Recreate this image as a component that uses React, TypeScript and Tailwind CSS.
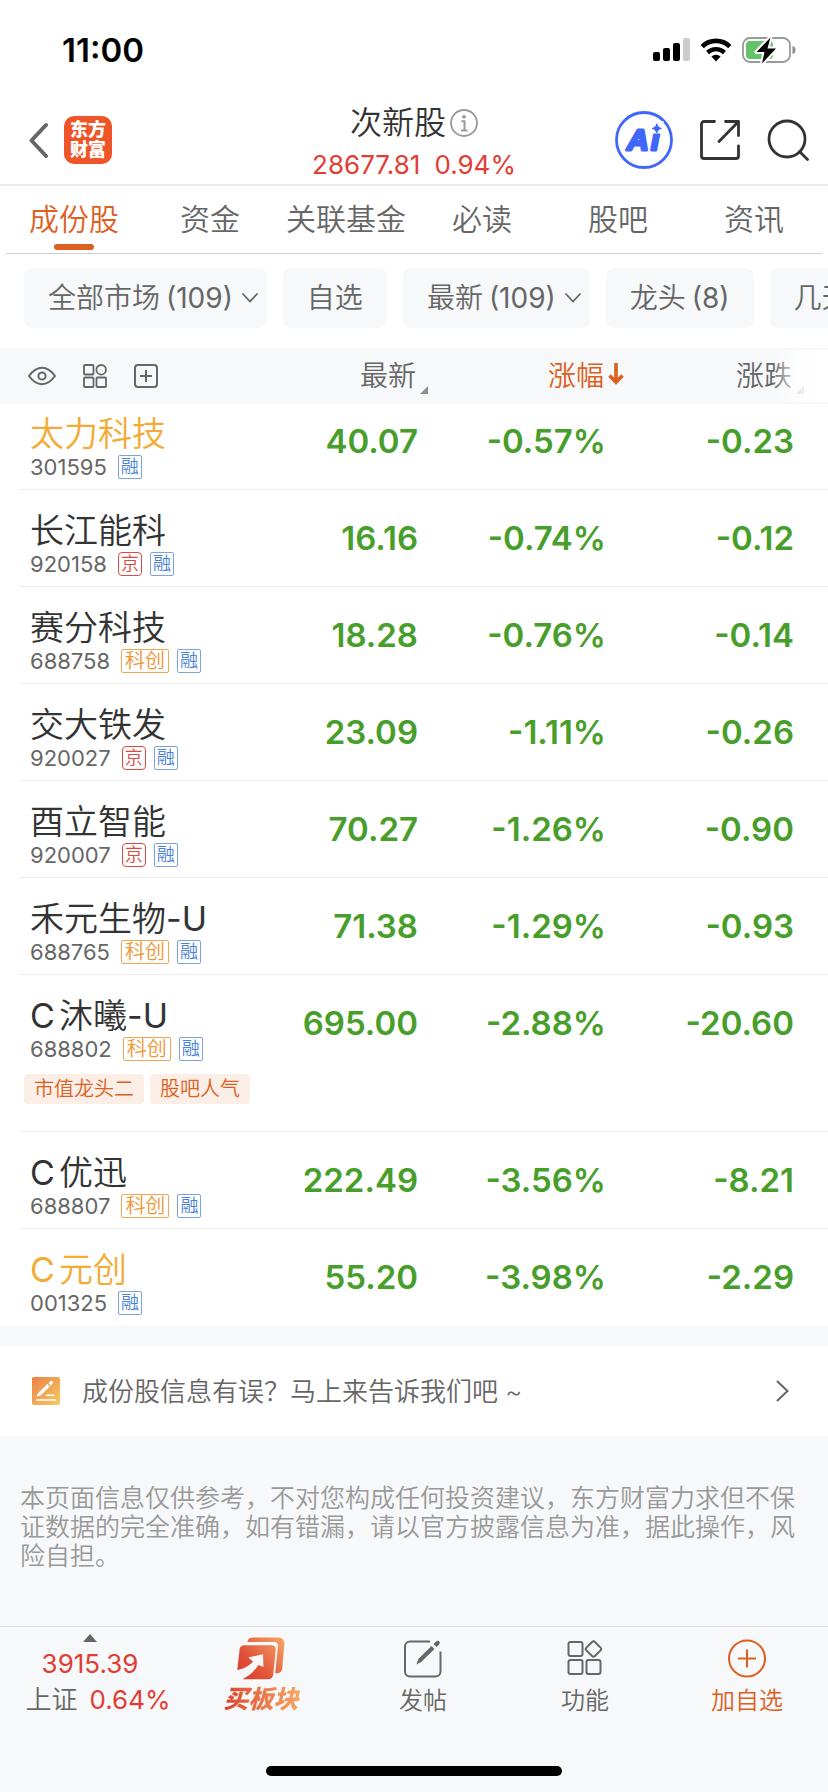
import React from "react";

type Tag = "京" | "融" | "科创";

interface Stock {
  name: string;
  code: string;
  tags: Tag[];
  price: string;
  pct: string;
  change: string;
  highlight?: boolean;
  labels?: string[];
}

const stocks: Stock[] = [
  { name: "太力科技", code: "301595", tags: ["融"], price: "40.07", pct: "-0.57%", change: "-0.23", highlight: true },
  { name: "长江能科", code: "920158", tags: ["京", "融"], price: "16.16", pct: "-0.74%", change: "-0.12" },
  { name: "赛分科技", code: "688758", tags: ["科创", "融"], price: "18.28", pct: "-0.76%", change: "-0.14" },
  { name: "交大铁发", code: "920027", tags: ["京", "融"], price: "23.09", pct: "-1.11%", change: "-0.26" },
  { name: "酉立智能", code: "920007", tags: ["京", "融"], price: "70.27", pct: "-1.26%", change: "-0.90" },
  { name: "禾元生物-U", code: "688765", tags: ["科创", "融"], price: "71.38", pct: "-1.29%", change: "-0.93" },
  {
    name: "C沐曦-U",
    code: "688802",
    tags: ["科创", "融"],
    price: "695.00",
    pct: "-2.88%",
    change: "-20.60",
    labels: ["市值龙头二", "股吧人气"],
  },
  { name: "C优迅", code: "688807", tags: ["科创", "融"], price: "222.49", pct: "-3.56%", change: "-8.21" },
  { name: "C元创", code: "001325", tags: ["融"], price: "55.20", pct: "-3.98%", change: "-2.29", highlight: true },
];

const tabs = ["成份股", "资金", "关联基金", "必读", "股吧", "资讯"];

const filters = [
  { label: "全部市场", count: "(109)", menu: true },
  { label: "自选" },
  { label: "最新", count: "(109)", menu: true },
  { label: "龙头", count: "(8)" },
  { label: "几天几板" },
];

const tagStyle: Record<Tag, string> = {
  京: "w-6 rounded-[4px] border-[#dc4a44] text-[#dc4a44] text-[18px]",
  融: "w-6 rounded-[2px] border-[#7ba3e0] text-[#4a82d6] text-[18px]",
  科创: "w-12 rounded-[2px] border-[#f2a654] text-[#f09530] text-[20px]",
};

function StatusBar() {
  return (
    <div className="flex h-[92px] items-center justify-between pt-2 pr-8 pl-[62px]">
      <span className="text-[33px] leading-10 font-semibold text-black">11:00</span>
      <div className="flex items-center gap-[10px]">
        <svg width="37" height="24" viewBox="0 0 37 24" aria-label="信号">
          <rect x="0" y="14" width="7" height="9" rx="2" />
          <rect x="10" y="10" width="7" height="13" rx="2" />
          <rect x="20" y="5" width="7" height="18" rx="2" />
          <rect x="30" y="0" width="7" height="23" rx="2" fill="#ccc" />
        </svg>
        <svg width="32" height="24" viewBox="0 0 32 24" aria-label="无线网络">
          <path d="M2.2 8.6a19.6 19.6 0 0 1 27.6 0" fill="none" stroke="#000" strokeWidth="4.6" />
          <path d="M7.6 14.6a12 12 0 0 1 16.8 0" fill="none" stroke="#000" strokeWidth="4.4" />
          <path d="M16 23.4l-4.6-4.8a6.600 6.600 0 0 1 9.200 0z" />
        </svg>
        <svg width="54" height="28" viewBox="0 0 54 28" aria-label="电池">
          <rect x="1" y="2" width="47" height="24" rx="7" fill="none" stroke="#999" strokeWidth="1.8" />
          <path d="M50.500 10v8c2-.6 3-2 3-4s-1-3.400-3-4z" fill="#8c8c8c" />
          <rect x="4" y="5" width="27" height="18" rx="4" fill="#62c466" />
          <path d="M28.500 1.500L14.500 16h8l-2.500 11.500L34 12.500h-8.500z" fill="#000" stroke="#fff" strokeWidth="4" strokeLinejoin="round" />
          <path d="M28.500 1.500L14.500 16h8l-2.500 11.500L34 12.500h-8.500z" fill="#000" />
        </svg>
      </div>
    </div>
  );
}

function Header() {
  return (
    <header className="grid h-[94px] grid-cols-[1fr_auto_1fr] items-center border-b-2 border-[#ebebeb] px-[19px]">
      <div className="flex items-center gap-4 pt-1 pl-[9px]">
        <button type="button" aria-label="返回">
          <svg width="20" height="36" viewBox="0 0 20 36" fill="none" stroke="#666" strokeWidth="4" strokeLinecap="round" strokeLinejoin="round">
            <path d="M18 3L3.500 18.500 18 34" />
          </svg>
        </button>
        <a
          href="#home"
          className="flex size-12 flex-col items-center justify-center rounded-[10px] bg-[#ee5528] text-[18px] leading-5 font-black text-white"
        >
          <span>东方</span>
          <span>财富</span>
        </a>
      </div>
      <div className="flex flex-col items-center pt-2">
        <h1 className="flex items-center gap-1 text-[32px] leading-[46px] font-[350] text-[#333]">
          次新股
          <svg width="28" height="28" viewBox="0 0 28 28" fill="none" stroke="#999" aria-label="说明">
            <circle cx="14" cy="14" r="13" strokeWidth="1.800" />
            <circle cx="14" cy="7.800" r="1.900" fill="#999" stroke="none" />
            <path d="M11.500 12.300h3v8.700M11 21.500h6.500" strokeWidth="2" />
          </svg>
        </h1>
        <p className="flex gap-3.5 text-[26px] leading-[38px] text-[#e13d34]">
          <span>28677.81</span>
          <span>0.94%</span>
        </p>
      </div>
      <div className="flex items-center justify-end gap-[27px] pt-1">
        <button type="button" aria-label="智能助手">
          <svg width="58" height="58" viewBox="0 0 58 58">
            <circle cx="29" cy="29" r="27.500" fill="#fff" stroke="#4066fa" strokeWidth="2.800" />
            <text y="39" fill="#4066fa" stroke="#4066fa" strokeWidth="3" strokeLinejoin="round" fontFamily="Liberation Sans" fontSize="30" fontWeight="700" fontStyle="italic">
              <tspan x="12">A</tspan>
              <tspan x="36">i</tspan>
            </text>
            <path d="M35.500 10h13v12.500h-13z" fill="#fff" />
            <path d="M41.800 12.800c.9 2.800 1.800 3.700 4.600 4.600-2.800.9-3.700 1.800-4.600 4.600-.9-2.800-1.800-3.700-4.600-4.600 2.800-.9 3.700-1.800 4.600-4.600z" fill="#4066fa" stroke="#4066fa" strokeWidth="1" />
          </svg>
        </button>
        <button type="button" aria-label="分享">
          <svg width="40" height="40" viewBox="0 0 40 40" fill="none" stroke="#333" strokeWidth="2.800" strokeLinecap="round" strokeLinejoin="round">
            <path d="M14.500 1.500H4A2.500 2.500 0 0 0 1.500 4v32A2.500 2.500 0 0 0 4 38.500h32a2.500 2.500 0 0 0 2.500-2.500V26" />
            <path d="M25.500 1.500h13v14M38.500 1.500L19 21.500" />
          </svg>
        </button>
        <button type="button" aria-label="搜索">
          <svg width="42" height="42" viewBox="0 0 42 42" fill="none" stroke="#333" strokeWidth="2.800" strokeLinecap="round">
            <circle cx="20" cy="20" r="18" />
            <path d="M32.500 32.500l8 8" />
          </svg>
        </button>
      </div>
    </header>
  );
}

function Tabs() {
  return (
    <nav className="mx-1.5 grid h-[68px] grid-cols-6 border-b border-[#d0d0d0]">
      {tabs.map((tab, i) => (
        <a
          key={tab}
          href={`#tab-${i}`}
          className={
            i === 0
              ? "relative flex justify-center pt-[11px] text-[30px] leading-[44px] font-[350] whitespace-nowrap text-[#dd5f22]"
              : "flex justify-center pt-[11px] text-[30px] leading-[44px] font-[350] whitespace-nowrap text-[#666]"
          }
        >
          {tab}
          {i === 0 && <span className="absolute bottom-[3px] h-1.5 w-10 rounded-full bg-[#dd5f22]" />}
        </a>
      ))}
    </nav>
  );
}

function Filters() {
  return (
    <div className="flex gap-4 overflow-x-auto pt-3.5 pb-5 pl-6 [scrollbar-width:none]">
      {filters.map((f) => (
        <button
          key={f.label}
          type="button"
          className={
            f.menu
              ? "flex h-[60px] shrink-0 items-center rounded-lg bg-[#f7f8fa] pr-2 pl-6 text-[28px] font-[350] text-[#666]"
              : "flex h-[60px] shrink-0 items-center rounded-lg bg-[#f7f8fa] px-6 text-[28px] font-[350] text-[#666]"
          }
        >
          {f.label}
          {f.count && <span className="ml-1.5 font-normal">{f.count}</span>}
          {f.menu && (
            <svg className="ml-2" width="18" height="12" viewBox="0 0 18 12" fill="none" stroke="#666" strokeWidth="1.800" strokeLinecap="round">
              <path d="M2 2l7 7.500L16 2" />
            </svg>
          )}
        </button>
      ))}
    </div>
  );
}

function SortMark() {
  return (
    <svg width="8" height="8" viewBox="0 0 8 8" className="mb-2.5 self-end" aria-hidden="true">
      <path d="M8 0v8H0z" fill="#8f8f8f" />
    </svg>
  );
}

function TableHead() {
  return (
    <thead>
      <tr className="h-14 bg-[#f7f8fa] text-[28px] text-[#666]">
        <th scope="col" className="p-0 font-normal" aria-label="股票">
          <div className="flex items-center gap-[27px] pl-7">
            <button type="button" aria-label="显示">
              <svg width="28" height="20" viewBox="0 0 28 20" fill="none" stroke="#666" strokeWidth="2" strokeLinejoin="round">
                <path d="M1 10C5 4.500 9 1.800 14 1.800S23 4.500 27 10c-4 5.500-8 8.200-13 8.200S5 15.500 1 10z" />
                <circle cx="14" cy="10" r="3.600" />
              </svg>
            </button>
            <button type="button" aria-label="布局">
              <svg width="24" height="24" viewBox="0 0 24 24" fill="none" stroke="#666" strokeWidth="1.800">
                <rect x="1" y="1" width="9.500" height="9.500" rx=".8" />
                <rect x="1" y="13.500" width="9.500" height="9.500" rx=".8" />
                <rect x="13.500" y="13.500" width="9.500" height="9.500" rx=".8" />
                <circle cx="18.200" cy="5.800" r="4.800" />
              </svg>
            </button>
            <button type="button" aria-label="添加">
              <svg width="24" height="24" viewBox="0 0 24 24" fill="none" stroke="#666" strokeWidth="2">
                <rect x="1" y="1" width="22" height="22" rx="3" />
                <path d="M12 6v12M6 12h12" />
              </svg>
            </button>
          </div>
        </th>
        <th scope="col" className="p-0 font-[350]">
          <button type="button" className="ml-auto flex h-14 items-center gap-1">
            最新
            <SortMark />
          </button>
        </th>
        <th scope="col" className="p-0 font-[350] text-[#dd5f22]">
          <button type="button" className="-mr-2 ml-auto flex h-14 items-center gap-1">
            涨幅
            <svg width="16" height="22" viewBox="0 0 16 22" fill="none" stroke="#dd5f22" strokeWidth="3.600" className="mb-1">
              <path d="M8 0v19M1.500 12.500L8 19.200l6.500-6.700" />
            </svg>
          </button>
        </th>
        <th scope="col" className="relative p-0 pr-6 font-[350]">
          <button type="button" className="ml-auto flex h-14 items-center gap-1">
            涨跌
            <SortMark />
          </button>
          <span className="absolute inset-y-0.5 right-0 w-14 bg-linear-to-r from-white/0 via-white/80 via-45% to-white" />
        </th>
      </tr>
    </thead>
  );
}

/** Latin letters carry a slightly heavier weight than the Chinese glyphs. */
function StockName({ name }: { name: string }) {
  return name.split(/([A-Z-]+)/).map((part, i) =>
    i % 2 === 1 ? (
      <span key={i} className="font-normal">
        {part}
      </span>
    ) : (
      part
    ),
  );
}

function StockRow({ stock, first, last }: { stock: Stock; first: boolean; last: boolean }) {
  const line = last ? "border-transparent" : "border-[#ebebeb]";
  const value = `border-b p-0 text-right align-top text-[33px] leading-10 font-semibold text-[#479e2b] ${line} ${first ? "pt-[17px]" : "pt-[28px]"}`;
  return (
    <tr>
      <th scope="row" className="p-0 pl-5 text-left font-normal">
        <div className={`border-b pb-[9px] pl-2.5 ${line} ${first ? "pt-2.5" : "pt-[21px]"}`}>
          <div
            className={`text-[34px] leading-10 font-[350] whitespace-nowrap [text-autospace:normal] ${stock.highlight ? "text-[#f3ab35]" : "text-[#333]"}`}
          >
            <StockName name={stock.name} />
          </div>
          <div className="flex h-[26px] items-center gap-2">
            <span className="mr-[3px] text-[22px] leading-[26px] text-[#666]">{stock.code}</span>
            {stock.tags.map((tag) => (
              <span key={tag} className={`flex h-6 shrink-0 items-center justify-center border leading-none font-[350] ${tagStyle[tag]}`}>
                {tag}
              </span>
            ))}
          </div>
          {stock.labels && (
            <div className="mt-3 mb-[18px] -ml-1.5 flex gap-1.5">
              {stock.labels.map((label) => (
                <span key={label} className="h-[30px] shrink-0 rounded-[4px] bg-[#faeee6] px-2.5 text-[20px] leading-[30px] font-[350] text-[#dd5f22]">
                  {label}
                </span>
              ))}
            </div>
          )}
        </div>
      </th>
      <td className={`${value} pr-2.5`}>{stock.price}</td>
      <td className={`${value} pr-2.5`}>{stock.pct}</td>
      <td className={`${value} pr-[34px]`}>{stock.change}</td>
    </tr>
  );
}

function StockTable() {
  return (
    <table className="w-full table-fixed border-separate border-spacing-0">
      <colgroup>
        <col />
        <col className="w-[188px]" />
        <col className="w-[188px]" />
        <col className="w-[212px]" />
      </colgroup>
      <TableHead />
      <tbody>
        {stocks.map((s, i) => (
          <StockRow key={s.code} stock={s} first={i === 0} last={i === stocks.length - 1} />
        ))}
      </tbody>
    </table>
  );
}

function Feedback() {
  return (
    <a href="#feedback" className="flex h-[90px] items-center bg-white pr-[39px] pl-8 text-[26px] font-[350] text-[#666]">
      <svg width="28" height="28" viewBox="0 0 28 28" className="mr-[22px]" aria-hidden="true">
        <defs>
          <linearGradient id="note" x1="0" y1="0" x2="1" y2="1">
            <stop offset="0" stopColor="#ec8146" />
            <stop offset="1" stopColor="#f5cb62" />
          </linearGradient>
        </defs>
        <rect width="28" height="28" rx="2" fill="url(#note)" />
        <path d="M4.500 20l1.500-3.800L15.500 7l2.400 2.400-9.500 9.100zM16.500 6l2-1.800a1.400 1.400 0 0 1 2.200 2.200L18.900 8.400z" fill="#fff" />
        <path d="M14.500 18.300h7M4.500 23h19" stroke="#fff" strokeWidth="1.500" strokeLinecap="round" />
      </svg>
      <span className="grow">成份股信息有误？马上来告诉我们吧 ~</span>
      <svg width="13" height="22" viewBox="0 0 13 22" fill="none" stroke="#666" strokeWidth="2" strokeLinecap="round" aria-hidden="true">
        <path d="M1.500 1.500L11.500 11l-10 9.500" />
      </svg>
    </a>
  );
}

function BottomBar() {
  const item = "flex flex-col items-center pt-2.5 text-[24px] leading-9 font-[350]";
  return (
    <footer className="mt-auto border-t border-[#dcdde0]">
      <div className="grid h-[139px] grid-cols-[180fr_162fr_162fr_162fr_162fr]">
        <button type="button" className="flex flex-col items-center pt-[7px] text-[26px] leading-9 text-[#e13d34]">
          <svg width="14" height="8" viewBox="0 0 14 8" className="mb-1" aria-hidden="true">
            <path d="M7 0l7 8H0z" fill="#666" />
          </svg>
          <span>3915.39</span>
          <span className="flex gap-3 pl-4 whitespace-nowrap">
            <span className="font-[350] text-[#666]">上证</span>
            <span>0.64%</span>
          </span>
        </button>
        <button type="button" className={item}>
          <svg width="48" height="44" viewBox="0 0 48 44" className="mb-1" aria-hidden="true">
            <defs>
              <linearGradient id="buy" x1="0" y1="44" x2="48" y2="0" gradientUnits="userSpaceOnUse">
                <stop offset="0" stopColor="#d93a2c" />
                <stop offset="0.350" stopColor="#e05038" />
                <stop offset="1" stopColor="#f5a868" />
              </linearGradient>
            </defs>
            <path
              d="M10.500 5C10.800 2 12.300.500 15.500.500H41c4.500 0 6.700 2.500 6.300 7l-2.100 24c-.3 3.200-2 4.800-5.800 4.800h-1.200L40.900 9.500c.3-2.800-1-4.500-3.700-4.500z"
              fill="url(#buy)"
            />
            <path
              d="M.3 33L2.500 13C2.800 9.800 4.500 8.300 7.500 8.300h27c3 0 4.500 1.700 4.200 4.700L36.300 37c-.3 3.500-2 5.200-5 5.200H5.500C13 38.500 17.500 34 21.300 28l5.200 2L26 17.300 11.300 20.600l4.800 4C11.500 29.500 7 31.800.3 33z"
              fill="url(#buy)"
            />
          </svg>
          <span className="bg-linear-to-r from-[#d93a2c] to-[#f5a868] bg-clip-text px-0.5 text-[25px] leading-7 font-black text-transparent italic">
            买板块
          </span>
        </button>
        <button type="button" className={`${item} text-[#666]`}>
          <svg width="38" height="44" viewBox="0 0 38 44" className="mb-0.5" fill="none" stroke="#666" strokeWidth="2" aria-hidden="true">
            <path d="M26 4.500H6a5 5 0 0 0-5 5v25a5 5 0 0 0 5 5h25.500a5 5 0 0 0 5-5V14.500" />
            <path d="M12.500 27.500l1.800-5.500L27.500 9l3 3-13.300 13zM29.500 7l2.600-2.600c2.200-2 5 .6 3 3L32.500 10z" fill="#666" stroke="none" />
          </svg>
          发帖
        </button>
        <button type="button" className={`${item} text-[#666]`}>
          <svg width="36" height="44" viewBox="0 0 36 44" className="mb-0.5" fill="none" stroke="#666" strokeWidth="2" aria-hidden="true">
            <rect x="1.500" y="5" width="14" height="14" rx="2" />
            <rect x="1.500" y="23" width="14" height="14" rx="2" />
            <rect x="19.500" y="23" width="14" height="14" rx="2" />
            <rect x="20.500" y="6" width="12" height="12" rx="2" transform="rotate(45 26.500 12)" />
          </svg>
          功能
        </button>
        <button type="button" className={`${item} text-[#dd5f22]`}>
          <svg width="38" height="44" viewBox="0 0 38 44" className="mb-0.5" fill="none" stroke="#dd5f22" strokeWidth="2" aria-hidden="true">
            <circle cx="19" cy="21.500" r="18" />
            <path d="M19 12.500v18M10 21.500h18" />
          </svg>
          加自选
        </button>
      </div>
      <div className="mx-auto mb-4 h-2.5 w-[296px] rounded-full bg-black" />
    </footer>
  );
}

export default function App() {
  return (
    <div className="flex min-h-screen flex-col overflow-hidden bg-[#f7f8fa] font-[Inter,'Noto_Sans_CJK_SC',sans-serif]">
      <div className="bg-white">
        <StatusBar />
        <Header />
        <Tabs />
        <Filters />
        <StockTable />
      </div>
      <div className="mt-5">
        <Feedback />
      </div>
      <p className="px-5 pt-12 pb-8 text-[25px] leading-[29px] font-[350] text-[#999]">
        本页面信息仅供参考，不对您构成任何投资建议，东方财富力求但不保证数据的完全准确，如有错漏，请以官方披露信息为准，据此操作，风险自担。
      </p>
      <BottomBar />
    </div>
  );
}
